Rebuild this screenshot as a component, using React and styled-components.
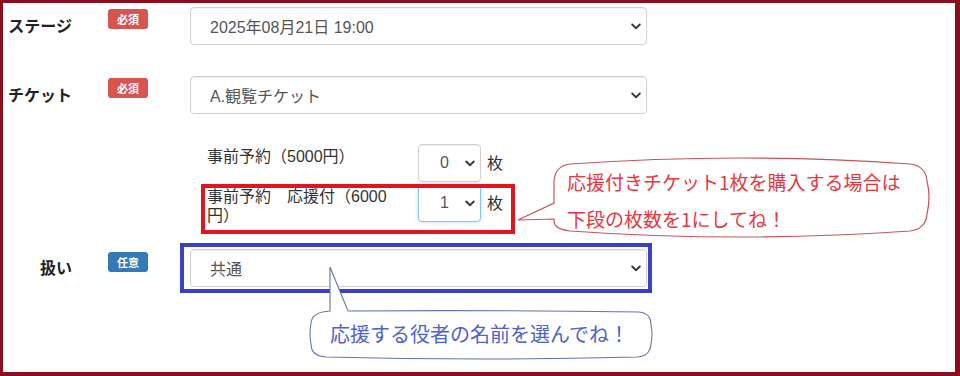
import React from "react";
import styled, { createGlobalStyle, css } from "styled-components";

const Global = createGlobalStyle`
  html, body { margin: 0; padding: 0; background: #fff; }
  body { width: 960px; height: 376px; overflow: hidden; }
  * { box-sizing: border-box; }
`;

const Frame = styled.div`
  position: relative;
  width: 960px;
  height: 376px;
  border-style: solid;
  border-color: #8a0f1e;
  border-width: 3px 5px 4px 3px;
  background: #fff;
  padding: 4px 0 0 5px;
  font-family: "Liberation Sans", "Noto Sans CJK JP", sans-serif;
  color: #333;
`;

const Form = styled.div`
  display: flex;
  flex-direction: column;
`;

const Row = styled.div`
  display: grid;
  grid-template-columns: 100px 82px 457px;
  align-items: center;
  height: 38px;
  margin-top: ${(p) => p.$mt || 0}px;
`;

const Label = styled.div`
  text-align: right;
  padding-right: 36px;
  padding-bottom: 3px;
  font-family: "Noto Sans CJK JP", sans-serif;
  font-weight: 700;
  font-size: 16px;
  color: #222;
  line-height: 20px;
`;

const Badge = styled.span`
  justify-self: start;
  align-self: start;
  margin-top: ${(p) => p.$mt || 2}px;
  width: 40px;
  height: 20px;
  border-radius: 3px;
  display: flex;
  align-items: center;
  justify-content: center;
  font-family: "Noto Sans CJK JP", sans-serif;
  font-size: 11px;
  font-weight: 700;
  color: #fff;
  background: ${(p) => (p.$kind === "optional" ? "#337ab7" : "#d9534f")};
`;

const Chevron = () => (
  <svg width="10" height="7" viewBox="0 0 10 7" aria-hidden="true">
    <polyline
      points="1.2,1.5 5,5.2 8.8,1.5"
      fill="none"
      stroke="#3a3a3a"
      strokeWidth="1.9"
      strokeLinecap="round"
      strokeLinejoin="round"
    />
  </svg>
);

const SelectBox = styled.div`
  display: flex;
  align-items: center;
  justify-content: space-between;
  height: 38px;
  padding: 0 5px 0 ${(p) => (p.$small ? 21 : 19)}px;
  border: 1px solid #d0d0d0;
  border-radius: 4px;
  background: #fff;
  color: #555;
  font-size: 16px;
  box-shadow: inset 0 1px 1px rgba(0, 0, 0, 0.06);
  ${(p) =>
    p.$small &&
    css`
      width: 63px;
    `}
  ${(p) =>
    p.$focused &&
    css`
      border-color: #8fc0ea;
      box-shadow: inset 0 1px 1px rgba(0, 0, 0, 0.06), 0 0 4px rgba(102, 175, 233, 0.45);
    `}
`;

const Select = ({ children, ...rest }) => (
  <SelectBox {...rest}>
    <span>{children}</span>
    <Chevron />
  </SelectBox>
);

const TicketBlock = styled.div`
  margin: 30px 0 0 199px;
  display: flex;
  flex-direction: column;
  gap: 2px;
`;

const TicketRow = styled.div`
  display: grid;
  grid-template-columns: 200px 63px auto;
  column-gap: 11px;
  align-items: start;
`;

const TicketLabel = styled.div`
  padding-top: 3px;
  font-size: 16px;
  line-height: 19px;
  color: #333;
`;

const QtyWrap = styled.div`
  display: flex;
  align-items: center;
  gap: 6px;
  grid-column: 2 / 4;
`;

const Unit = styled.span`
  font-family: "Noto Sans CJK JP", sans-serif;
  font-size: 16px;
  color: #333;
  padding-bottom: 2px;
`;

const Highlight = styled.div`
  position: absolute;
  left: ${(p) => p.$x}px;
  top: ${(p) => p.$y}px;
  width: ${(p) => p.$w}px;
  height: ${(p) => p.$h}px;
  border: 4px solid ${(p) => p.$color};
  pointer-events: none;
`;

const Callout = styled.div`
  position: absolute;
  left: ${(p) => p.$x}px;
  top: ${(p) => p.$y}px;
  width: ${(p) => p.$w}px;
  height: ${(p) => p.$h}px;
  padding: ${(p) => p.$pad};
  font-family: "Noto Sans CJK JP", sans-serif;
  font-size: ${(p) => p.$fs}px;
  line-height: ${(p) => p.$lh}px;
  color: ${(p) => p.$color};
  white-space: nowrap;
`;

const Bubble = styled.svg`
  position: absolute;
  left: 0;
  top: 0;
  overflow: visible;
`;

const CalloutText = styled.div`
  position: relative;
`;

export default function App() {
  return (
    <>
      <Global />
      <Frame>
        <Form>
          <Row>
            <Label>ステージ</Label>
            <Badge>必須</Badge>
            <Select>2025年08月21日 19:00</Select>
          </Row>
          <Row $mt={31}>
            <Label>チケット</Label>
            <Badge>必須</Badge>
            <Select>A.観覧チケット</Select>
          </Row>
          <TicketBlock>
            <TicketRow>
              <TicketLabel>事前予約（5000円）</TicketLabel>
              <QtyWrap>
                <Select $small>0</Select>
                <Unit>枚</Unit>
              </QtyWrap>
            </TicketRow>
            <TicketRow>
              <TicketLabel>事前予約　応援付（6000円）</TicketLabel>
              <QtyWrap>
                <Select $small $focused>
                  1
                </Select>
                <Unit>枚</Unit>
              </QtyWrap>
            </TicketRow>
          </TicketBlock>
          <Row $mt={24}>
            <Label>扱い</Label>
            <Badge $kind="optional" $mt={3}>
              任意
            </Badge>
            <Select>共通</Select>
          </Row>
        </Form>

        <Highlight $x={198} $y={181} $w={314} $h={50} $color="#e2141f" />
        <Highlight $x={177} $y={240} $w={472} $h={50} $color="#3b40c9" />

        <Callout
          $x={551}
          $y={156}
          $w={372}
          $h={77}
          $pad="4px 0 0 13px"
          $fs={19}
          $lh={37}
          $color="#e8383d"
        >
          <Bubble width="372" height="77" viewBox="0 0 372 77">
            <path
              d="M 16 5 Q 186 -7 356 5 Q 372 7 373 22 Q 377 38 373 55 Q 372 70 356 72 Q 186 84 16 72 Q 0 70 0 62 L 0 60 L -36 61 L 0 44 L 0 22 Q 1 7 16 5 Z"
              fill="#fff"
              stroke="#c8535a"
              strokeWidth="1.2"
            />
          </Bubble>
          <CalloutText>
            応援付きチケット1枚を購入する場合は
            <br />
            下段の枚数を1にしてね！
          </CalloutText>
        </Callout>

        <Callout
          $x={309}
          $y={308}
          $w={338}
          $h={46}
          $pad="0 0 0 18px"
          $fs={20}
          $lh={46}
          $color="#4d62d3"
        >
          <Bubble width="338" height="46" viewBox="0 0 338 46">
            <path
              d="M 18 0 L 18 -44 L 36 0 Q 182 -1 327 1 Q 339 2 339 14 Q 341 23 339 33 Q 338 45 326 46 Q 170 50 14 46 Q -1 45 -1 33 Q -3 23 -1 12 Q 0 1 18 0 Z"
              fill="#fff"
              stroke="#6473ad"
              strokeWidth="1.1"
            />
          </Bubble>
          <CalloutText>応援する役者の名前を選んでね！</CalloutText>
        </Callout>
      </Frame>
    </>
  );
}
